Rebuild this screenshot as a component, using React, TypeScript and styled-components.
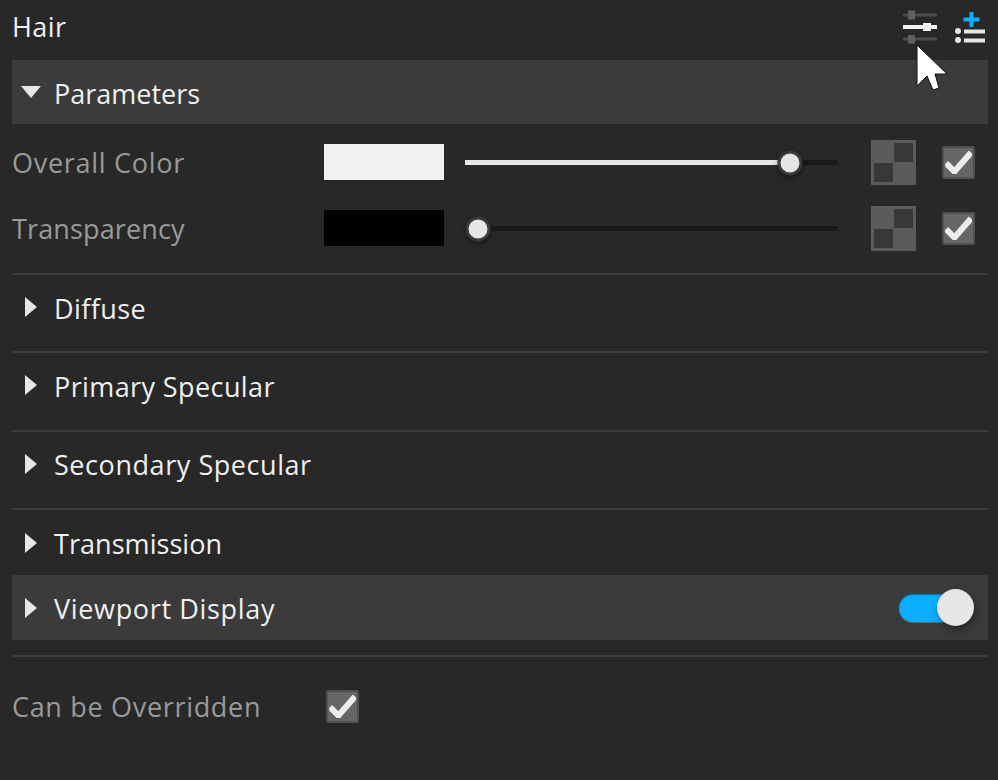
import React from 'react';
import styled, { createGlobalStyle } from 'styled-components';

const Global = createGlobalStyle`
  html, body { margin: 0; padding: 0; background: #282828; }
  body { font-family: "Open Sans", "Noto Sans", sans-serif; }
`;
const Panel = styled.div`
  position: relative; width: 998px; height: 780px; overflow: hidden; box-sizing: border-box;
  padding: 0 10px 0 12px; background: #282828; color: #f2f2f2;
`;
const TopBar = styled.div`
  height: 60px; display: flex; align-items: center; justify-content: space-between;
  margin-right: -10px; padding-right: 13px; padding-bottom: 6px; box-sizing: border-box;
`;
const Title = styled.div`font-size: 27px; line-height: 36px; color: #f2f2f2; letter-spacing: 0.4px;`;
const TopIcons = styled.div`display: flex; gap: 18px; align-items: center;`;
const SectionHead = styled.div<{ $filled?: boolean; $h?: number }>`
  height: ${p => p.$h ?? 64}px; display: flex; align-items: center; box-sizing: border-box;
  padding-right: 14px; background: ${p => (p.$filled ? '#3b3b3b' : 'transparent')};
`;
const Arrow = styled.div`width: 42px; display: flex; justify-content: center; flex: none; padding-right: 5px; box-sizing: border-box;`;
const SectionName = styled.div<{ $track?: number }>`
  font-size: 27px; line-height: 36px; color: #f0f0f0; letter-spacing: ${p => p.$track ?? 0}px; flex: 1; margin-top: 3px;
`;
const ParamRow = styled.div`height: 66px; display: flex; align-items: center;`;
const ParamGroup = styled.div`padding-top: 5px; padding-bottom: 12px;`;
const Label = styled.div<{ $w?: number; $track?: number }>`
  width: ${p => p.$w ?? 312}px; font-size: 27px; line-height: 36px; color: #9a9a9a;
  letter-spacing: ${p => p.$track ?? 0}px; flex: none; margin-top: 1px;
`;
const Swatch = styled.div<{ $c: string }>`width: 120px; height: 36px; background: ${p => p.$c}; flex: none; margin-right: 21px;`;
const Track = styled.div`position: relative; width: 373px; height: 5px; background: #1a1a1a; flex: none; margin-right: 33px; margin-top: 1px;`;
const Fill = styled.div`height: 100%; background: #e6e6e6;`;
const Thumb = styled.div`
  position: absolute; top: 50%; width: 25px; height: 25px; box-sizing: border-box; border-radius: 50%;
  transform: translate(-50%, -50%); background: #e6e6e6; border: 3px solid #3a3a3a;
  box-shadow: 0 2px 5px rgba(0,0,0,.45);
`;
const MapTile = styled.div`
  position: relative; width: 45px; height: 45px; background: #5b5b5b; flex: none; margin-right: 26px; margin-top: 1px;
  &::before, &::after { content: ""; position: absolute; width: 19px; height: 19px; background: #383838; }
  &::before { top: 3px; right: 3px; }
  &::after { bottom: 3px; left: 3px; }
`;
const CheckBox = styled.div`
  width: 33px; height: 33px; box-sizing: border-box; background: #666; border: 2px solid #4f4f4f; border-radius: 2px;
  display: flex; align-items: center; justify-content: center; flex: none;
`;
const Divider = styled.div`height: 2px; background: #3c3c3c;`;
const Section = styled.div`padding-bottom: 12.4px; border-bottom: 2px solid #3c3c3c;`;
const Switch = styled.div`position: relative; width: 75px; height: 37px; flex: none;`;
const SwitchTrack = styled.div`
  position: absolute; left: 0; right: 16px; top: 5px; height: 28px; border-radius: 14px; background: #0aaeff;
  box-shadow: inset 0 1px 1px rgba(0,0,0,.35), 0 1px 0 #666;
`;
const SwitchKnob = styled.div`
  position: absolute; right: 0; top: 0; width: 37px; height: 37px; border-radius: 50%; background: #e6e6e6;
  box-shadow: 2px 4px 8px rgba(0,0,0,.4);
`;
const Footer = styled.div`display: flex; align-items: center; height: 66px; margin-top: 16px;`;
const Spacer = styled.div`height: 15px;`;
const Cursor = styled.svg`position: absolute; left: 916px; top: 44px;`;

const Tri = ({ down }: { down?: boolean }) =>
  down ? (
    <svg width="20" height="12" viewBox="0 0 20 12"><path d="M0 0H20L10 12Z" fill="#e6e6e6" /></svg>
  ) : (
    <svg width="12" height="20" viewBox="0 0 12 20"><path d="M0 0L12 10L0 20Z" fill="#e6e6e6" /></svg>
  );

const Check = () => (
  <svg width="27" height="24" viewBox="0 0 27 24">
    <path d="M1 13L9.5 21.5L26 2.5" fill="none" stroke="#ececec" strokeWidth="6" />
  </svg>
);

const Sliders = () => (
  <svg width="34" height="34" viewBox="0 0 34 34">
    <g fill="#4d4d4d">
      <rect x="0" y="3.5" width="34" height="3" />
      <rect x="0" y="27.5" width="34" height="3" />
    </g>
    <g fill="#606060">
      <rect x="5" y="0.5" width="7" height="9" />
      <rect x="5" y="25" width="7" height="8.5" />
    </g>
    <g fill="#f2f2f2">
      <rect x="0" y="15" width="34" height="4" />
      <rect x="20" y="13" width="8" height="8" />
    </g>
  </svg>
);

const AddList = () => (
  <svg width="30" height="31" viewBox="0 0 30 31">
    <path d="M14.5 0h4v5.5h6v4h-6V15h-4V9.500h-6v-4h6Z" fill="#0aaeff" />
    <g fill="#e6e6e6">
      <circle cx="3" cy="19" r="3" />
      <circle cx="3" cy="28" r="3" />
      <rect x="9" y="17.500" width="21" height="4" />
      <rect x="9" y="26.500" width="21" height="4" />
    </g>
  </svg>
);

const ParamLine = ({ label, track, color, pct, fill }: { label: string; track: number; color: string; pct: number; fill: number }) => (
  <ParamRow>
    <Label $track={track}>{label}</Label>
    <Swatch $c={color} />
    <Track>
      <Fill style={{ width: `${fill}%` }} />
      <Thumb style={{ left: `${pct}%` }} />
    </Track>
    <MapTile />
    <CheckBox><Check /></CheckBox>
  </ParamRow>
);

const collapsed = [
  { name: 'Diffuse', track: 0.4 },
  { name: 'Primary Specular', track: 0.4 },
  { name: 'Secondary Specular', track: 0.56 },
];

export default function App() {
  return (
    <Panel>
      <Global />
      <TopBar>
        <Title>Hair</Title>
        <TopIcons><Sliders /><AddList /></TopIcons>
      </TopBar>
      <SectionHead $filled>
        <Arrow><Tri down /></Arrow>
        <SectionName>Parameters</SectionName>
      </SectionHead>
      <ParamGroup>
        <ParamLine label="Overall Color" track={0.72} color="#f2f2f2" pct={87} fill={87} />
        <ParamLine label="Transparency" track={0.13} color="#000000" pct={3.5} fill={0} />
      </ParamGroup>
      <Divider />
      {collapsed.map(s => (
        <Section key={s.name}>
          <SectionHead><Arrow><Tri /></Arrow><SectionName $track={s.track}>{s.name}</SectionName></SectionHead>
        </Section>
      ))}
      <SectionHead $h={65}><Arrow><Tri /></Arrow><SectionName $track={0.05}>Transmission</SectionName></SectionHead>
      <SectionHead $filled $h={65}>
        <Arrow><Tri /></Arrow>
        <SectionName $track={0.66}>Viewport Display</SectionName>
        <Switch><SwitchTrack /><SwitchKnob /></Switch>
      </SectionHead>
      <Spacer />
      <Divider />
      <Footer>
        <Label $w={314} $track={0.68}>Can be Overridden</Label>
        <CheckBox><Check /></CheckBox>
      </Footer>
      <Cursor width="32" height="48" viewBox="0 0 32 48">
        <path d="M1 1L1 42L11 32L17 46L23 44L19 30L31 30Z" fill="#fff" stroke="#111" strokeWidth="1" />
      </Cursor>
    </Panel>
  );
}
